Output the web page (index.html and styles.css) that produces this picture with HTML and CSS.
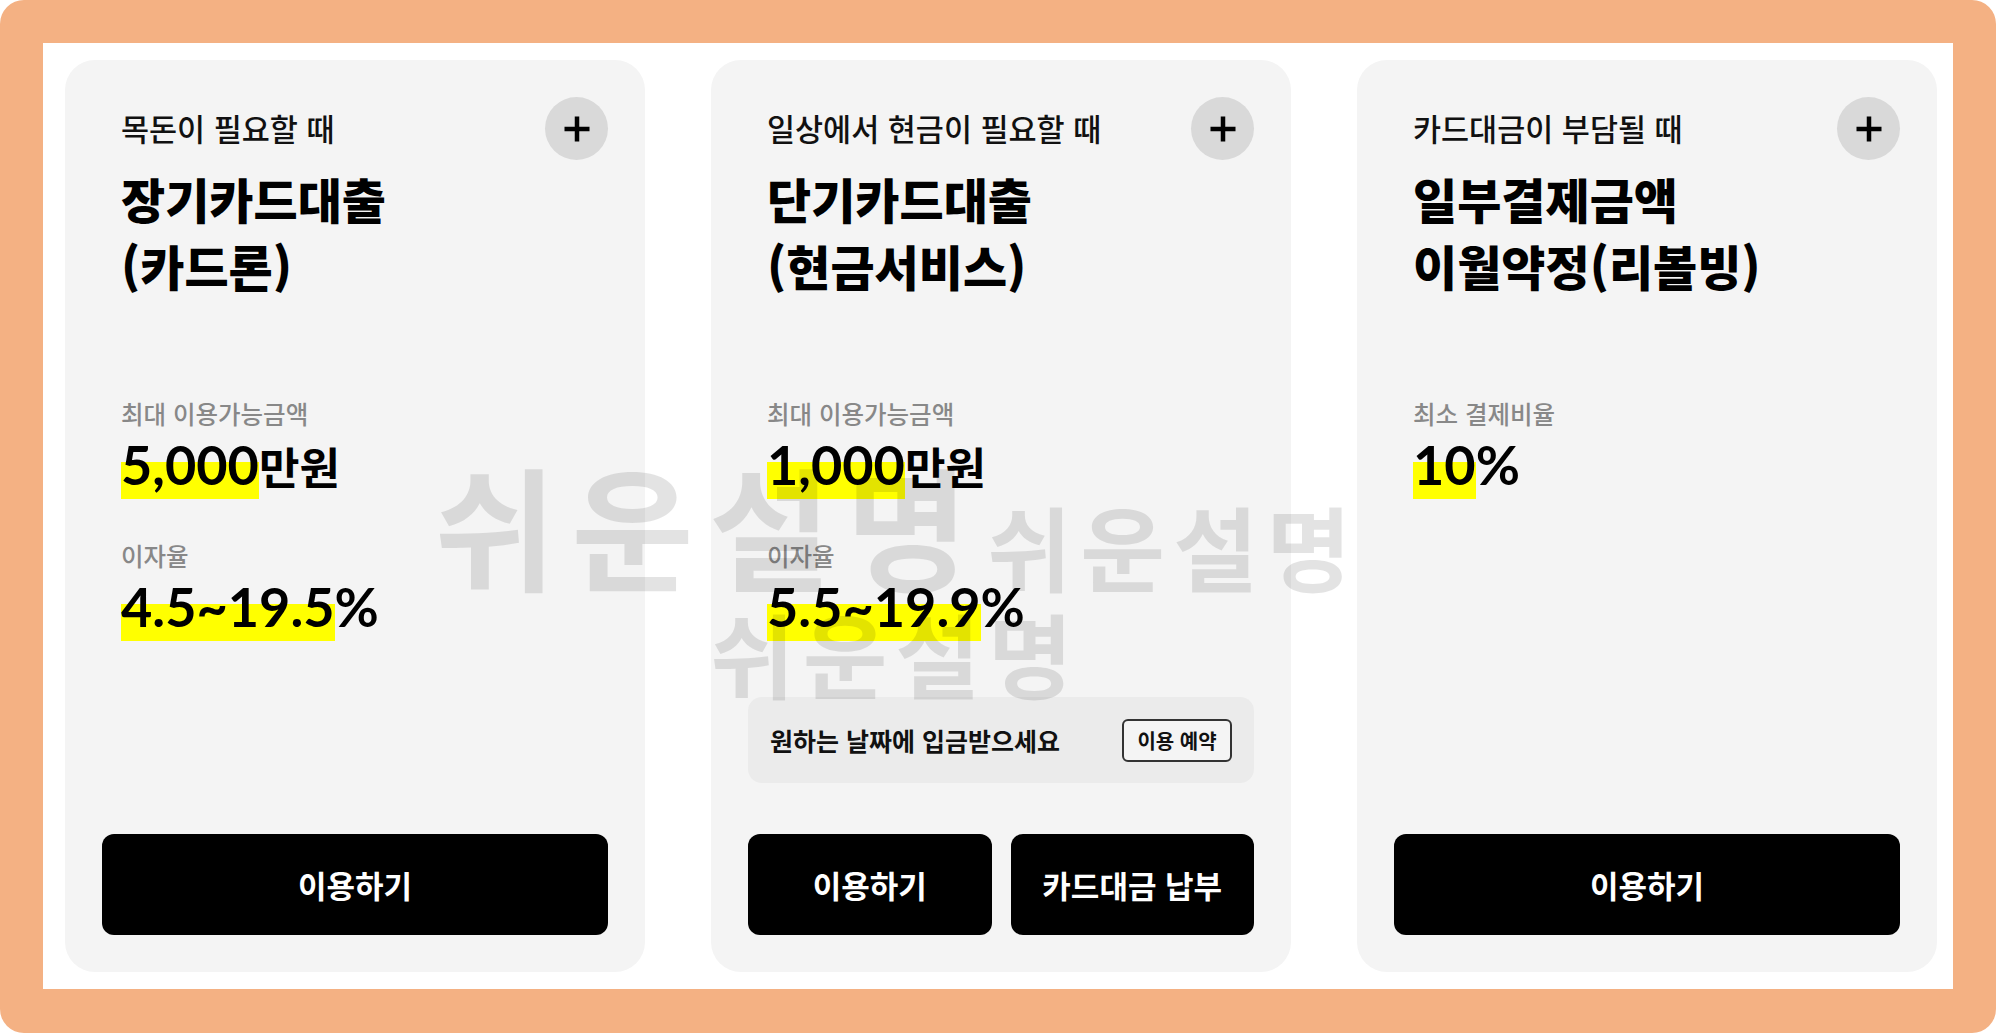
FILE: index.html
```html
<!DOCTYPE html>
<html lang="ko">
<head>
<meta charset="utf-8">
<title>카드대출 상품</title>
<link rel="stylesheet" href="styles.css">
</head>
<body>
<div class="frame">
  <div class="sheet">
    <section class="card">
      <div class="card-head">
        <div class="head-text">
          <p class="eyebrow">목돈이 필요할 때</p>
          <h2 class="title">장기카드대출<br>(카드론)</h2>
        </div>
        <button class="plus" aria-label="더보기"><svg width="28" height="28" viewBox="0 0 28 28"><path d="M14 1.5v25M1.5 14h25" stroke="#000" stroke-width="4.5" fill="none"/></svg></button>
      </div>
      <dl class="facts">
        <dt>최대 이용가능금액</dt>
        <dd class="value"><span class="hl">5,000</span><span class="unit">만원</span></dd>
        <dt>이자율</dt>
        <dd class="value"><span class="hl">4.5~19.5</span>%</dd>
      </dl>
      <div class="actions"><button class="btn">이용하기</button></div>
    </section>

    <section class="card">
      <div class="card-head">
        <div class="head-text">
          <p class="eyebrow">일상에서 현금이 필요할 때</p>
          <h2 class="title">단기카드대출<br>(현금서비스)</h2>
        </div>
        <button class="plus" aria-label="더보기"><svg width="28" height="28" viewBox="0 0 28 28"><path d="M14 1.5v25M1.5 14h25" stroke="#000" stroke-width="4.5" fill="none"/></svg></button>
      </div>
      <dl class="facts">
        <dt>최대 이용가능금액</dt>
        <dd class="value"><span class="hl">1,000</span><span class="unit">만원</span></dd>
        <dt>이자율</dt>
        <dd class="value"><span class="hl">5.5~19.9</span>%</dd>
      </dl>
      <div class="notice">
        <span class="notice-text">원하는 날짜에 입금받으세요</span>
        <button class="reserve">이용 예약</button>
      </div>
      <div class="actions"><button class="btn">이용하기</button><button class="btn">카드대금 납부</button></div>
    </section>

    <section class="card">
      <div class="card-head">
        <div class="head-text">
          <p class="eyebrow">카드대금이 부담될 때</p>
          <h2 class="title">일부결제금액<br>이월약정(리볼빙)</h2>
        </div>
        <button class="plus" aria-label="더보기"><svg width="28" height="28" viewBox="0 0 28 28"><path d="M14 1.5v25M1.5 14h25" stroke="#000" stroke-width="4.5" fill="none"/></svg></button>
      </div>
      <dl class="facts">
        <dt>최소 결제비율</dt>
        <dd class="value"><span class="hl">10</span>%</dd>
      </dl>
      <div class="actions"><button class="btn">이용하기</button></div>
    </section>
  </div>

  <div class="watermark wm-big">쉬운설명</div>
  <div class="watermark wm-right">쉬운설명</div>
  <div class="watermark wm-low">쉬운설명</div>
</div>
</body>
</html>
```

FILE: styles.css
```css
* {
  box-sizing: border-box;
  margin: 0;
  padding: 0;
}

html,
body {
  width: 1996px;
  height: 1033px;
  background: #ffffff;
  overflow: hidden;
}

body {
  font-family: "Noto Sans CJK KR", "Noto Sans", sans-serif;
  color: #000;
}

.frame {
  position: relative;
  width: 1996px;
  height: 1033px;
  background: #f4b183;
  border-radius: 24px;
  padding: 43px 43px 44px 43px;
}

.sheet {
  height: 100%;
  background: #ffffff;
  display: flex;
  gap: 66px;
  padding: 17px 14px 17px 22px;
}

.card {
  flex: none;
  width: 580px;
  background: #f4f4f4;
  border-radius: 30px;
  padding: 37px;
  display: flex;
  flex-direction: column;
}

.card-head {
  display: flex;
  justify-content: space-between;
  align-items: flex-start;
}

.head-text {
  padding-left: 19px;
  padding-top: 11px;
}

.eyebrow {
  font-size: 30.5px;
  line-height: 40px;
  font-weight: 500;
  color: #111;
}

.title {
  margin-top: 17px;
  font-size: 48px;
  line-height: 67px;
  font-weight: 900;
  color: #000;
}

.plus {
  flex: none;
  width: 63px;
  height: 63px;
  border: none;
  border-radius: 50%;
  background: #d9d9d9;
  display: flex;
  align-items: center;
  justify-content: center;
}

.facts {
  padding-left: 19px;
  margin-top: 99px;
}

.facts dt {
  font-size: 24.5px;
  line-height: 32px;
  font-weight: 500;
  color: #888;
}

.facts dd + dt {
  margin-top: 45px;
}

.value {
  margin-top: 5px;
  height: 60px;
  font-family: Lato, "Noto Sans CJK KR", sans-serif;
  font-size: 54px;
  line-height: 60px;
  font-weight: 700;
  color: #000;
  white-space: nowrap;
}

.value .unit {
  font-family: "Noto Sans CJK KR", sans-serif;
  font-size: 44px;
}

.hl {
  background: linear-gradient(to bottom, transparent 45%, #ffff00 45%);
  padding-bottom: 2px;
}

.notice {
  margin-top: auto;
  height: 86px;
  background: #ebebeb;
  border-radius: 14px;
  display: flex;
  align-items: center;
  justify-content: space-between;
  padding: 0 22px;
}

.notice-text {
  font-size: 25px;
  font-weight: 700;
  color: #111;
}

.reserve {
  width: 110px;
  height: 43px;
  border: 2px solid #333;
  border-radius: 6px;
  background: #f4f4f4;
  font-family: "Noto Sans CJK KR", sans-serif;
  font-size: 20px;
  font-weight: 700;
  color: #111;
}

.actions {
  margin-top: auto;
  display: flex;
  gap: 19px;
}

.notice + .actions {
  margin-top: 51px;
}

.btn {
  flex: 1;
  height: 101px;
  border: none;
  border-radius: 12px;
  background: #000;
  color: #fff;
  font-family: "Noto Sans CJK KR", sans-serif;
  font-size: 31px;
  font-weight: 700;
}

.watermark {
  position: absolute;
  font-family: "Noto Sans CJK KR", sans-serif;
  font-weight: 700;
  line-height: 1;
  color: rgba(0, 0, 0, 0.11);
  white-space: nowrap;
  pointer-events: none;
}

.wm-big {
  left: 434px;
  top: 457px;
  font-size: 133px;
  letter-spacing: 15px;
}

.wm-right {
  left: 987px;
  top: 499px;
  font-size: 92px;
  letter-spacing: 8.5px;
}

.wm-low {
  left: 710px;
  top: 606px;
  font-size: 92px;
  letter-spacing: 8px;
}
```
